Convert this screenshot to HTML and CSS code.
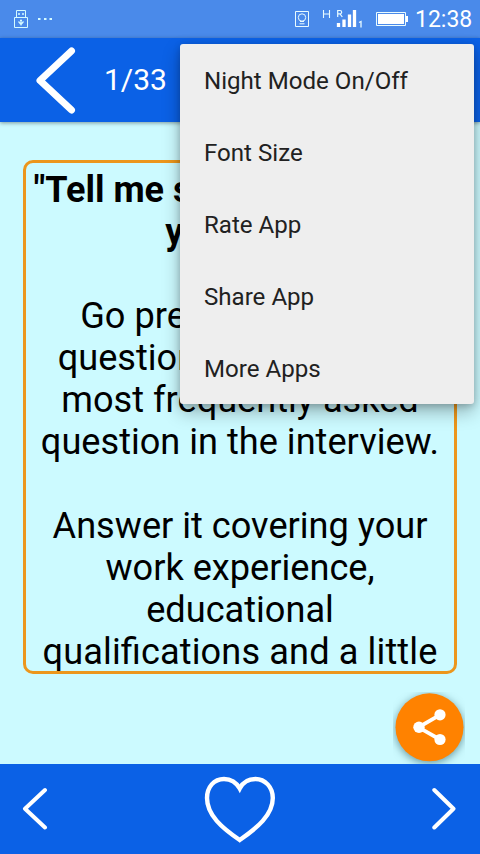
FILE: index.html
```html
<!DOCTYPE html>
<html lang="en">
<head>
<meta charset="utf-8">
<title>Interview Questions</title>
<link rel="stylesheet" href="styles.css">
</head>
<body>
<div class="screen">
  <div class="statusbar">
    <svg class="status-left" width="60" height="38" viewBox="0 0 60 38" fill="none" stroke="#d5fbff">
      <path d="M16.500 17V10.500H25.500V17M14.500 17.500H27.500V27.500H14.500Z"/>
      <path d="M18 14h2M22 14h2" stroke-width="1.500"/>
      <path d="M21 19.500v6M18.500 21.500l2.500 3 2.500-3M20 20.500h2" stroke-width="1.200"/>
      <path d="M38 19h2.500M44 19h2.500M49.500 19h2.500" stroke-width="2.200"/>
    </svg>
    <div class="status-right">
      <svg width="120" height="38" viewBox="290 0 120 38" fill="none" stroke="#e9fbff">
        <path d="M295.500 11.500H308.500V26.500H295.500Z"/>
        <circle cx="302" cy="17.500" r="3.700"/>
        <path d="M300 21.500h4M299.500 23.800h5"/>
        <path d="M323.500 10v8M329.500 10v8M323.500 14h6" stroke-width="1.100"/>
        <path d="M337.700 17v-6.500h2.300a1.600 1.600 0 0 1 0 3.300h-2.300M340 13.800l2.300 3.200" stroke-width="1.200"/>
        <path d="M338.500 27v-4M344 27v-7.500M349.500 27V14.500M354.500 27V10" stroke="#fff" stroke-width="3.300"/>
        <path d="M359 22.500l2-1v6" stroke-width="1.300"/>
        <path d="M376.500 12.500H405.500V25.500H376.500Z"/>
        <path d="M378 14h26v10h-26z" fill="#fff" stroke="none"/>
        <path d="M406 16h2v6h-2z" fill="#fff" stroke="none"/>
      </svg>
      <span class="clock">12:38</span>
    </div>
  </div>
  <header class="appbar">
    <svg width="50" height="84" viewBox="30 38 50 84" fill="none" stroke="#fff" stroke-width="7" stroke-linecap="round" stroke-linejoin="round"><path d="M71.500 51L40 80.500L71.500 110"/></svg>
    <span class="counter">1/33</span>
  </header>
  <main class="content">
    <article class="card">
      <h1>"Tell me something about<br>yourself."</h1>
      <p>Go prepared for this<br>question. As this is the<br>most frequently asked<br>question in the interview.</p>
      <p>Answer it covering your<br>work experience,<br>educational<br><span class="wide">qualifications and a little</span></p>
    </article>
    <div class="share">
      <svg width="70" height="70" viewBox="394 692 70 70">
        <circle cx="429.500" cy="727.300" r="34" fill="#ff8200"/>
        <path d="M440 714.800L418.500 727.300L440 739.500" fill="none" stroke="#fff" stroke-width="3.800"/>
        <g fill="#fff"><circle cx="440" cy="714.800" r="5.600"/><circle cx="419" cy="727.300" r="5.700"/><circle cx="440" cy="739.500" r="5.600"/></g>
      </svg>
    </div>
  </main>
  <nav class="bottombar">
    <svg width="480" height="90" viewBox="0 764 480 90" fill="none" stroke="#fff" stroke-width="4" stroke-linecap="round" stroke-linejoin="round">
      <path d="M45 790L25 808.700L45 827.500M434.300 790L453.500 808.700L434.300 827.500"/>
      <path stroke-linejoin="miter" stroke-width="4.400" d="M239.700 788.500C236 782 230 779 224 779C214 779 207 787 207 798C207 815 222 828 239.700 840C257 828 272.800 815 272.800 798C272.800 787 265 779 255.500 779C249 779 243 782 239.700 788.500Z"/>
    </svg>
  </nav>
  <div class="menu">
    <div class="item">Night Mode On/Off</div>
    <div class="item">Font Size</div>
    <div class="item">Rate App</div>
    <div class="item">Share App</div>
    <div class="item">More Apps</div>
  </div>
</div>
</body>
</html>
```
FILE: styles.css
```css
* { box-sizing: border-box; }
body { margin: 0; font-family: Roboto, sans-serif; }
.screen { position: relative; display: flex; flex-direction: column; width: 480px; height: 854px; overflow: hidden; background: #ccfaff; }
.statusbar { display: flex; justify-content: space-between; height: 38px; background: #4a8aea; color: #fff; }
.status-right { display: flex; padding-right: 12px; }
.clock { width: 58px; padding-left: 5px; font-size: 23px; line-height: 39px; white-space: nowrap; }
.appbar { position: relative; display: flex; align-items: center; gap: 24px; height: 84px; padding-left: 30px; background: #0b61e6; box-shadow: 0 1px 4px rgba(0, 0, 0, .4); color: #fff; }
.counter { font-size: 30px; line-height: 86px; }
.content { flex: 1; display: flex; flex-direction: column; padding: 38px 23px 0; }
.card { height: 514px; padding-top: 6px; border: 3px solid #ec961c; border-radius: 10px; overflow: hidden; color: #000; font-size: 36.15px; line-height: 42px; text-align: center; white-space: nowrap; }
.card h1 { margin: 0; font-size: 36px; font-weight: 700; }
.card p { margin: 42px 0 0; }
.wide { letter-spacing: .12px; font-feature-settings: "liga" 1; }
.share { align-self: flex-end; width: 72px; height: 72px; margin: 18px -8px 0 0; overflow: hidden; }
.share svg { display: block; margin-left: 1px; overflow: visible; filter: drop-shadow(0 2px 4px rgba(0, 50, 60, .5)); }
.bottombar { height: 90px; background: #0b61e6; }
.bottombar svg { display: block; }
.menu { position: absolute; top: 44px; left: 180px; width: 294px; height: 360px; background: #eee; border-radius: 3px; box-shadow: 0 8px 18px rgba(0, 0, 0, .28), 0 2px 7px rgba(0, 0, 0, .2); }
.item { height: 72px; padding-left: 24px; color: #212121; font-size: 24.1px; line-height: 75px; }
```
